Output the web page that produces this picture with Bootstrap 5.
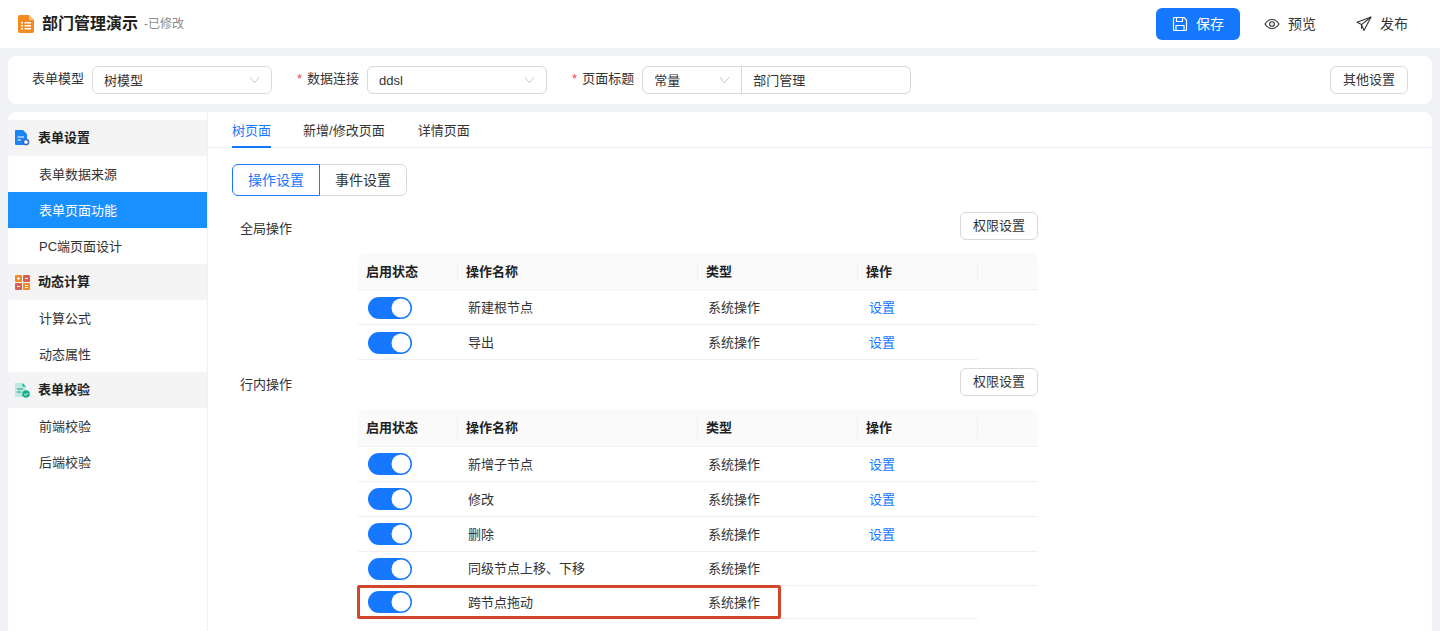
<!DOCTYPE html>
<html lang="zh-CN">
<head>
    <meta charset="UTF-8">
    <meta name="viewport" content="width=device-width, initial-scale=1.0">
    <title>部门管理演示</title>

    <link href="https://cdn.jsdelivr.net/npm/bootstrap@5.3.0/dist/css/bootstrap.min.css" rel="stylesheet">
    <style>
        html, body { height: 100%; }
        body {
            background: #f0f1f5;
            color: #333;
            font-family: "Liberation Sans", "Noto Sans CJK SC", sans-serif;
            font-size: 13px;
            overflow: hidden;
        }
        .page-wrap { height: 631px; }

        /* top bar */
        .top-bar { height: 48px; background: #fff; padding: 0 16px 0 18px; flex: none; }
        .page-name { font-size: 16px; font-weight: 700; color: #1f1f1f; margin-left: 8px; }
        .page-state { font-size: 12px; color: #8c8c8c; margin-left: 6px; }
        .bar-btn {
            width: 84px; height: 32px; padding: 0; font-size: 14px; border: 0; border-radius: 6px;
            color: #333; gap: 8px;
        }
        .bar-btn-save { background: #1677ff; color: #fff; }
        .bar-btn-save:hover { background: #1677ff; color: #fff; }

        /* form settings bar */
        .filter-bar { height: 48px; margin: 8px 8px 8px; background: #fff; border-radius: 8px; padding: 0 24px; flex: none; }
        .filter-label { margin: 0 8px 0 0; color: #333; white-space: nowrap; line-height: 20px; padding-bottom: 2px; }
        .req-star { color: #f5484f; margin-right: 5px; }
        .filter-select.form-select, .filter-input.form-control {
            height: 28px; min-height: 28px; font-size: 13px; color: #333; border-color: #d9d9d9; border-radius: 6px;
            padding: 1px 11px 0; box-shadow: none;
        }
        .filter-input.form-control { padding: 0 11px 2px; }
        .filter-select.form-select {
            background-image: url("data:image/svg+xml,%3csvg xmlns='http://www.w3.org/2000/svg' viewBox='0 0 12 8'%3e%3cpath fill='none' stroke='%23bfbfbf' d='M1 1l5 6 5-6'/%3e%3c/svg%3e");
            background-size: 11px 8px;
            background-position: right 11px center;
        }
        .select-wide { width: 180px; margin-right: 25px; }
        .input-pair { width: 269px; }
        .input-pair .form-select { flex: 0 0 100px; width: 100px; }
        .plain-btn {
            height: 28px; padding: 0 12px; font-size: 13px; color: #333; background: #fff;
            border: 1px solid #d9d9d9; border-radius: 6px;
        }

        /* main panel */
        .main-panel { flex: 1 1 auto; min-height: 0; background: #fff; border-radius: 8px 8px 0 0; margin: 0 8px; }
        .side-menu { width: 200px; flex: none; border-right: 1px solid #f0f0f0; padding-top: 8px; }
        .menu-group {
            height: 36px; background: #f4f4f5; font-weight: 700; color: #1f1f1f; padding-left: 7px; gap: 8px;
        }
        .menu-item { height: 36px; padding: 1px 0 0 31px; color: #333; }
        .menu-item-active { background: #1890ff; color: #fff; }

        .work-area { min-width: 0; }
        .tab-strip { height: 36px; border-bottom: 1px solid #f0f0f0; padding-left: 24px; gap: 32px; }
        .tab-link { height: 36px; line-height: 37px; color: #333; text-decoration: none; }
        .tab-link:nth-child(2) { padding-right: 1px; }
        .tab-link-active { color: #1677ff; border-bottom: 2px solid #1677ff; }
        .work-body { padding: 16px 0 0 24px; width: 830px; }
        .seg-btn {
            height: 32px; width: 88px; padding: 0; font-size: 14px; color: #333; background: #fff; border: 1px solid #d9d9d9;
            border-radius: 6px;
        }
        .seg-btn-active { color: #1677ff; border-color: #1677ff; position: relative; z-index: 1; }
        .seg-btn-active:hover { color: #1677ff; border-color: #1677ff; }
        .section-head { padding-left: 8px; }
        .section-name { padding-top: 7px; line-height: 20px; }

        .ops-table { table-layout: fixed; width: 680px; margin: 13px 0 8px 126px; border-collapse: separate; border-spacing: 0; font-size: 13px; }
        .ops-table > :not(caption) > * > * { padding: 1px 0 0 10px; border-bottom: 1px solid #f0f0f0; color: #333; vertical-align: middle; box-shadow: none; }
        .ops-table thead th { height: 37px; background: #fafafa; font-weight: 700; color: #1f1f1f; padding-left: 8px; position: relative; }
        .ops-table-inline thead th { height: 38px; }
        .ops-table thead th:first-child { border-top-left-radius: 8px; }
        .ops-table thead th:last-child { border-top-right-radius: 8px; }
        .ops-table thead th + th::before {
            content: ""; position: absolute; left: -1px; top: 8px; bottom: 8px; width: 1px; background: #f0f0f0;
        }
        .ops-table tbody tr { height: 35px; }
        .ops-table tbody tr.row-short { height: 34px; }
        .ops-table tbody tr.row-tail { height: 33px; }
        .ops-table tbody tr:last-child td:last-child { border-bottom: 0; }
        .op-link { color: #1677ff; text-decoration: none; margin-left: 1px; }

        .ops-switch.form-check-input {
            width: 44px; height: 22px; margin: 1px 0 0; float: none; display: block; border: 0;
            background-color: #1677ff; border-radius: 11px; box-shadow: none;
            background-image: url("data:image/svg+xml,%3csvg xmlns='http://www.w3.org/2000/svg' viewBox='0 0 22 22'%3e%3ccircle cx='11' cy='11' r='9.5' fill='%23fff'/%3e%3c/svg%3e");
            background-position: right center;
            background-size: 22px 22px;
        }
        .switch-cell.form-switch { padding-left: 10px !important; min-height: 0; margin: 0; }
        .ops-table-inline .switch-cell.form-switch { padding-top: 0; }
        .ops-table-inline .ops-switch.form-check-input { margin-top: 0; }
        .ops-table-inline .row-short .ops-switch.form-check-input { margin-top: 1px; }
        .mark-box {
            position: absolute; left: -1px; top: -1px; width: 424px; height: 34px;
            border: 3px solid #d2472b; border-radius: 2px; pointer-events: none;
        }
    </style>
</head>
<body>
<div class="page-wrap d-flex flex-column">

    <!-- top bar -->
    <header class="top-bar d-flex align-items-center justify-content-between">
        <div class="d-flex align-items-center">
            <svg width="16" height="18" viewBox="0 0 16 18"><path d="M2 0h9l5 5v11a2 2 0 0 1-2 2H2a2 2 0 0 1-2-2V2a2 2 0 0 1 2-2z" fill="#f58a1f"/><path d="M11 0l5 5h-4a1 1 0 0 1-1-1z" fill="#fbc48c"/><path d="M3 7h2v1.500H3zM6.500 7H13v1.500H6.500zM3 10h2v1.500H3zM6.500 10H13v1.500H6.500zM3 13h2v1.500H3zM6.500 13H13v1.500H6.500z" fill="#fff"/></svg>
            <span class="page-name">部门管理演示</span>
            <span class="page-state">-已修改</span>
        </div>
        <div class="d-flex gap-2">
            <button type="button" class="btn bar-btn bar-btn-save d-flex align-items-center justify-content-center">
                <svg width="16" height="16" viewBox="0 0 16 16" fill="none" stroke="#fff" stroke-width="1.200"><path d="M1.500 2.500a1 1 0 0 1 1-1h9.500l2.500 2.500v9.500a1 1 0 0 1-1 1h-11a1 1 0 0 1-1-1z"/><path d="M4.500 1.500v4h6v-4M4 14.500v-5h8v5"/></svg>
                <span>保存</span>
            </button>
            <button type="button" class="btn bar-btn d-flex align-items-center justify-content-center">
                <svg width="16" height="16" viewBox="0 0 16 16" fill="none" stroke="#333" stroke-width="1.100"><path d="M1 8c1.800-3 4.100-4.500 7-4.500S13.200 5 15 8c-1.800 3-4.100 4.500-7 4.500S2.800 11 1 8z"/><circle cx="8" cy="8" r="2.300"/></svg>
                <span>预览</span>
            </button>
            <button type="button" class="btn bar-btn d-flex align-items-center justify-content-center">
                <svg width="16" height="16" viewBox="0 0 16 16" fill="none" stroke="#333" stroke-width="1.100" stroke-linejoin="round"><path d="M15 1L1 6.200l4.500 2.400L8 14.500z"/><path d="M15 1L5.500 8.600v4.200"/></svg>
                <span>发布</span>
            </button>
        </div>
    </header>

    <!-- form settings -->
    <section class="filter-bar d-flex align-items-center">
        <label class="filter-label">表单模型</label>
        <select class="form-select filter-select select-wide"><option>树模型</option></select>
        <label class="filter-label"><span class="req-star">*</span>数据连接</label>
        <select class="form-select filter-select select-wide"><option>ddsl</option></select>
        <label class="filter-label"><span class="req-star">*</span>页面标题</label>
        <div class="input-group input-pair">
            <select class="form-select filter-select"><option>常量</option></select>
            <input type="text" class="form-control filter-input" value="部门管理">
        </div>
        <button type="button" class="btn plain-btn ms-auto">其他设置</button>
    </section>

    <div class="main-panel d-flex">
        <!-- left menu -->
        <aside class="side-menu">
            <div class="menu-group d-flex align-items-center">
                <svg width="15" height="16" viewBox="0 0 15 16"><path d="M1 0h7l4 4v11H1a1 1 0 0 1-1-1V1a1 1 0 0 1 1-1z" fill="#1a84f5"/><path d="M2.500 7H9M2.500 10H6" stroke="#fff" stroke-width="1.200"/><circle cx="11" cy="12" r="2.600" fill="#fff" stroke="#3a67b5" stroke-width="1.500"/></svg>
                <span>表单设置</span>
            </div>
            <div class="menu-item d-flex align-items-center">表单数据来源</div>
            <div class="menu-item menu-item-active d-flex align-items-center">表单页面功能</div>
            <div class="menu-item d-flex align-items-center">PC端页面设计</div>
            <div class="menu-group d-flex align-items-center">
                <svg width="15" height="15" viewBox="0 0 15 15"><rect width="7" height="7" rx="1" fill="#f58a1f"/><rect x="8" width="7" height="7" rx="1" fill="#d9604f"/><rect y="8" width="7" height="7" rx="1" fill="#d9604f"/><rect x="8" y="8" width="7" height="7" rx="1" fill="#f58a1f"/><path d="M2 3.500h3M3.500 2v3M10 3.500h3M2 11.500h3M10 10.500h3M10 12.500h3" stroke="#fff"/></svg>
                <span>动态计算</span>
            </div>
            <div class="menu-item d-flex align-items-center">计算公式</div>
            <div class="menu-item d-flex align-items-center">动态属性</div>
            <div class="menu-group d-flex align-items-center">
                <svg width="15" height="15" viewBox="0 0 15 15"><path d="M0 0h7.500L11 3.500V14H0z" fill="#bfe8de"/><path d="M7.500 0L11 3.500H7.500z" fill="#16b08f"/><path d="M2 6h6M2 9h4" stroke="#16a085"/><circle cx="11" cy="11" r="3.800" fill="#16b08f"/><path d="M9.200 11l1.300 1.300 2.200-2.300" fill="none" stroke="#fff"/></svg>
                <span>表单校验</span>
            </div>
            <div class="menu-item d-flex align-items-center">前端校验</div>
            <div class="menu-item d-flex align-items-center">后端校验</div>
        </aside>

        <main class="work-area flex-grow-1">
            <nav class="tab-strip d-flex">
                <a class="tab-link tab-link-active" href="#">树页面</a>
                <a class="tab-link" href="#">新增/修改页面</a>
                <a class="tab-link" href="#">详情页面</a>
            </nav>

            <div class="work-body">
                <div class="btn-group mb-3" role="group">
                    <button type="button" class="btn seg-btn seg-btn-active">操作设置</button>
                    <button type="button" class="btn seg-btn">事件设置</button>
                </div>

                <div class="section-head d-flex justify-content-between">
                    <span class="section-name">全局操作</span>
                    <button type="button" class="btn plain-btn">权限设置</button>
                </div>
                <table class="table ops-table">
                    <colgroup><col style="width:100px"><col style="width:240px"><col style="width:160px"><col style="width:120px"><col style="width:60px"></colgroup>
                    <thead>
                        <tr><th>启用状态</th><th>操作名称</th><th>类型</th><th>操作</th><th></th></tr>
                    </thead>
                    <tbody id="globalRows"></tbody>
                </table>

                <div class="section-head d-flex justify-content-between">
                    <span class="section-name">行内操作</span>
                    <button type="button" class="btn plain-btn">权限设置</button>
                </div>
                <table class="table ops-table ops-table-inline">
                    <colgroup><col style="width:100px"><col style="width:240px"><col style="width:160px"><col style="width:120px"><col style="width:60px"></colgroup>
                    <thead>
                        <tr><th>启用状态</th><th>操作名称</th><th>类型</th><th>操作</th><th></th></tr>
                    </thead>
                    <tbody id="inlineRows"></tbody>
                </table>
            </div>
        </main>
    </div>
</div>

<script src="https://cdn.jsdelivr.net/npm/bootstrap@5.3.0/dist/js/bootstrap.bundle.min.js"></script>
<script>
    const globalOps = [
        { name: '新建根节点', setting: true },
        { name: '导出', setting: true }
    ];
    const inlineOps = [
        { name: '新增子节点', setting: true },
        { name: '修改', setting: true },
        { name: '删除', setting: true },
        { name: '同级节点上移、下移', setting: false, rowClass: 'row-short' },
        { name: '跨节点拖动', setting: false, rowClass: 'row-tail', marked: true }
    ];

    function renderRows(id, ops) {
        const tableBody = document.getElementById(id);
        ops.forEach(op => {
            tableBody.innerHTML += `
                <tr class="${op.rowClass || ''}">
                    <td class="switch-cell form-switch position-relative">
                        <input class="form-check-input ops-switch" type="checkbox" role="switch" checked>
                        ${op.marked ? '<span class="mark-box"></span>' : ''}
                    </td>
                    <td>${op.name}</td>
                    <td>系统操作</td>
                    <td>${op.setting ? '<a class="op-link" href="#">设置</a>' : ''}</td>
                    <td></td>
                </tr>`;
        });
    }

    renderRows('globalRows', globalOps);
    renderRows('inlineRows', inlineOps);
</script>
</body>
</html>
